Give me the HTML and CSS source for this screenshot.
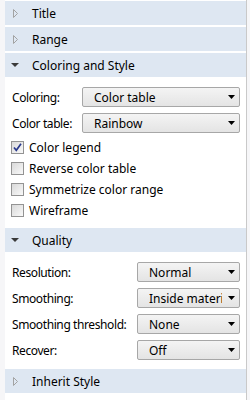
FILE: index.html
```html
<!DOCTYPE html>
<html lang="en">
<head>
    <meta charset="UTF-8">
    <title>Settings</title>
    <link rel="stylesheet" href="styles.css">
</head>
<body>
    <div class="panel">
        <div class="section-head">
            <span class="tri"><svg width="6" height="9" viewBox="0 0 6 9"><path d="M0.5 0.5 L4.5 4.5 L0.5 8.5 Z" fill="none" stroke="#a3a3a3"/></svg></span>
            <span>Title</span>
        </div>
        <div class="section-head">
            <span class="tri"><svg width="6" height="9" viewBox="0 0 6 9"><path d="M0.5 0.5 L4.5 4.5 L0.5 8.5 Z" fill="none" stroke="#a3a3a3"/></svg></span>
            <span>Range</span>
        </div>
        <div class="section-head">
            <span class="tri open"><svg width="8" height="4" viewBox="0 0 8 4"><path d="M0 0 H8 L4 4 Z" fill="#3a3a3a"/></svg></span>
            <span>Coloring and Style</span>
        </div>
        <div class="section-body">
            <div class="row">
                <label class="lbl narrow">Coloring:</label>
                <div class="select"><span>Color table</span><svg class="arrow" width="7" height="4" viewBox="0 0 7 4"><path d="M0 0 H7 L3.5 4 Z" fill="#000"/></svg></div>
            </div>
            <div class="row">
                <label class="lbl narrow">Color table:</label>
                <div class="select"><span>Rainbow</span><svg class="arrow" width="7" height="4" viewBox="0 0 7 4"><path d="M0 0 H7 L3.5 4 Z" fill="#000"/></svg></div>
            </div>
            <div class="checks">
                <div class="check"><span class="box"><svg width="11" height="11" viewBox="0 0 11 11"><path d="M2 5.5 L4.3 8.3 L9 1.8" fill="none" stroke="#29398c" stroke-width="1.7"/></svg></span>Color legend</div>
                <div class="check"><span class="box"></span>Reverse color table</div>
                <div class="check"><span class="box"></span>Symmetrize color range</div>
                <div class="check"><span class="box"></span>Wireframe</div>
            </div>
        </div>
        <div class="section-head">
            <span class="tri open"><svg width="8" height="4" viewBox="0 0 8 4"><path d="M0 0 H8 L4 4 Z" fill="#3a3a3a"/></svg></span>
            <span>Quality</span>
        </div>
        <div class="section-body quality">
            <div class="row">
                <label class="lbl wide">Resolution:</label>
                <div class="select"><span>Normal</span><svg class="arrow" width="7" height="4" viewBox="0 0 7 4"><path d="M0 0 H7 L3.5 4 Z" fill="#000"/></svg></div>
            </div>
            <div class="row">
                <label class="lbl wide">Smoothing:</label>
                <div class="select"><span class="cut">Inside material</span><svg class="arrow" width="7" height="4" viewBox="0 0 7 4"><path d="M0 0 H7 L3.5 4 Z" fill="#000"/></svg></div>
            </div>
            <div class="row">
                <label class="lbl wide">Smoothing threshold:</label>
                <div class="select"><span>None</span><svg class="arrow" width="7" height="4" viewBox="0 0 7 4"><path d="M0 0 H7 L3.5 4 Z" fill="#000"/></svg></div>
            </div>
            <div class="row">
                <label class="lbl wide">Recover:</label>
                <div class="select"><span>Off</span><svg class="arrow" width="7" height="4" viewBox="0 0 7 4"><path d="M0 0 H7 L3.5 4 Z" fill="#000"/></svg></div>
            </div>
        </div>
        <div class="section-head">
            <span class="tri"><svg width="6" height="9" viewBox="0 0 6 9"><path d="M0.5 0.5 L4.5 4.5 L0.5 8.5 Z" fill="none" stroke="#a3a3a3"/></svg></span>
            <span>Inherit Style</span>
        </div>
    </div>
</body>
</html>
```

FILE: styles.css
```css
body {
    margin: 0;
    font-family: "Noto Sans", sans-serif;
    font-size: 12px;
    color: #000;
    background-color: #f6f6f8;
}

.panel {
    margin-left: 5px;
    width: 241px;
    height: 399px;
    padding-top: 1px;
    background-color: #fff;
    border-right: 1px solid #c9c9c9;
}

.section-head {
    height: 24px;
    margin-bottom: 2px;
    background-color: #dee7f2;
    display: flex;
    align-items: center;
    padding-left: 6px;
}

.tri {
    width: 21px;
    display: flex;
    align-items: center;
    padding-left: 2px;
    box-sizing: border-box;
}

.tri.open {
    padding-left: 0;
}

.section-body {
    padding: 8px 6px 7px 7px;
}

.section-body.quality {
    padding-bottom: 9px;
}

.row {
    display: flex;
    align-items: center;
    height: 20px;
    margin-bottom: 6px;
}

.quality .row:last-child {
    margin-bottom: 0;
}

.lbl {
    letter-spacing: -0.4px;
    white-space: nowrap;
}

.lbl.narrow {
    width: 70px;
}

.lbl.wide {
    width: 125px;
}

.select {
    flex-grow: 1;
    height: 18px;
    border: 1px solid #a7a7a7;
    border-radius: 2px;
    background: linear-gradient(#f4f4f4, #e4e4e4);
    display: flex;
    align-items: center;
    justify-content: space-between;
    padding: 0 4px 0 11px;
}

.cut {
    white-space: nowrap;
    overflow: hidden;
    width: 73px;
}

.checks {
    margin-top: -2px;
}

.check {
    display: flex;
    align-items: center;
    height: 21px;
    gap: 5px;
    margin-left: -1px;
}

.box {
    width: 11px;
    height: 11px;
    border: 1px solid #939393;
    background: linear-gradient(135deg, #d9d9d9, #f9f9f9);
    display: flex;
}
```
